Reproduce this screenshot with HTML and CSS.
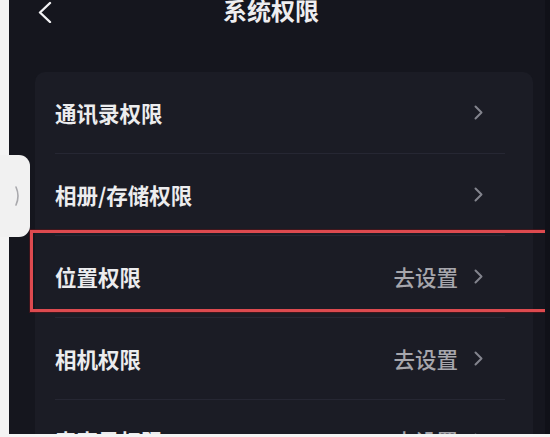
FILE: index.html
```html
<!DOCTYPE html>
<html>
<head>
    <meta charset="utf-8">
    <meta name="viewport" content="width=device-width, initial-scale=1.0">
    <title>系统权限</title>
    <link rel="stylesheet" href="styles.css">
</head>
<body>

    <div class="screen">

        <div class="header">
            <svg class="back" width="16" height="22" viewBox="0 0 16 22">
                <path d="M13 2 L3 11.5 L13 21" fill="none" stroke="#f2f2f4" stroke-width="2.4" stroke-linecap="round" stroke-linejoin="round"/>
            </svg>
            <h1 class="title">系统权限</h1>
        </div>

        <div class="card">
            <div class="row">
                <div class="row-inner">
                    <span class="label">通讯录权限</span>
                    <span class="arrow"><svg width="9" height="15" viewBox="0 0 9 15"><path d="M1.5 1.5 L7.5 7.5 L1.5 13.5" fill="none" stroke="#83848d" stroke-width="2" stroke-linecap="round" stroke-linejoin="round"/></svg></span>
                </div>
            </div>
            <div class="row">
                <div class="row-inner">
                    <span class="label">相册/存储权限</span>
                    <span class="arrow"><svg width="9" height="15" viewBox="0 0 9 15"><path d="M1.5 1.5 L7.5 7.5 L1.5 13.5" fill="none" stroke="#83848d" stroke-width="2" stroke-linecap="round" stroke-linejoin="round"/></svg></span>
                </div>
            </div>
            <div class="row marked">
                <div class="row-inner">
                    <span class="label">位置权限</span>
                    <span class="value">去设置</span>
                    <span class="arrow"><svg width="9" height="15" viewBox="0 0 9 15"><path d="M1.5 1.5 L7.5 7.5 L1.5 13.5" fill="none" stroke="#83848d" stroke-width="2" stroke-linecap="round" stroke-linejoin="round"/></svg></span>
                </div>
                <div class="highlight"></div>
            </div>
            <div class="row">
                <div class="row-inner">
                    <span class="label">相机权限</span>
                    <span class="value">去设置</span>
                    <span class="arrow"><svg width="9" height="15" viewBox="0 0 9 15"><path d="M1.5 1.5 L7.5 7.5 L1.5 13.5" fill="none" stroke="#83848d" stroke-width="2" stroke-linecap="round" stroke-linejoin="round"/></svg></span>
                </div>
            </div>
            <div class="row">
                <div class="row-inner">
                    <span class="label">麦克风权限</span>
                    <span class="value">去设置</span>
                    <span class="arrow"><svg width="9" height="15" viewBox="0 0 9 15"><path d="M1.5 1.5 L7.5 7.5 L1.5 13.5" fill="none" stroke="#83848d" stroke-width="2" stroke-linecap="round" stroke-linejoin="round"/></svg></span>
                </div>
            </div>
        </div>

    </div>

    <div class="side-tab">
        <svg width="8" height="22" viewBox="0 0 8 22"><path d="M2 2 Q6 11 2 20" fill="none" stroke="#a9a9ad" stroke-width="1.6" stroke-linecap="round"/></svg>
    </div>

</body>
</html>
```

FILE: styles.css
```css
body {
    margin: 0;
    padding: 0 0 0 9px;
    background-color: #f4f4f4;
    font-family: "Noto Sans CJK SC", "Noto Sans", sans-serif;
    position: relative;
}

.screen {
    height: 434px;
    background-color: #15161e;
    overflow: hidden;
    border-right: 5px solid #101118;
}

.header {
    display: flex;
    align-items: center;
    height: 48px;
    margin-top: -14px;
}

.back {
    margin-left: 28px;
    margin-top: 4px;
}

.title {
    margin: 0 0 0 170px;
    font-size: 24px;
    font-weight: bold;
    color: #eeeef0;
    line-height: 48px;
}

.card {
    margin: 38px 0 0 26px;
    width: 498px;
    background-color: #1b1c25;
    border-radius: 10px;
}

.row {
    height: 82px;
    position: relative;
}

.row-inner {
    display: flex;
    align-items: center;
    height: 81px;
    margin: 0 28px 0 20px;
    padding-right: 22px;
    border-bottom: 1px solid #262733;
}

.label {
    flex: 1;
    font-size: 21.5px;
    font-weight: bold;
    color: #ececee;
}

.value {
    font-size: 21.5px;
    font-weight: 500;
    color: #a6a6ac;
    margin-right: 16px;
}

.arrow {
    display: flex;
}

.highlight {
    position: absolute;
    top: -6px;
    left: -5px;
    right: -40px;
    height: 76px;
    border: 3px solid #dd4a4f;
    box-shadow: 0 0 0 1px rgba(90, 20, 25, 0.6);
}

.side-tab {
    position: absolute;
    top: 155px;
    left: 0;
    width: 30px;
    height: 82px;
    background-color: #f1f1f1;
    border-radius: 0 11px 11px 0;
    display: flex;
    align-items: center;
    justify-content: flex-end;
}

.side-tab svg {
    margin-right: 8px;
}
```
